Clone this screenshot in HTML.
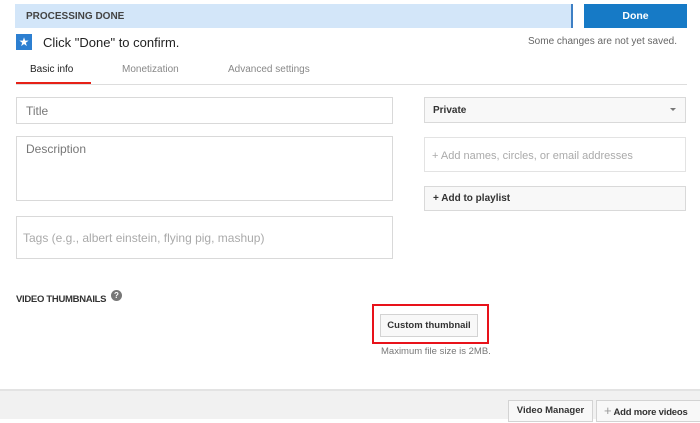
<!DOCTYPE html>
<html><head><style>
*{margin:0;padding:0;box-sizing:border-box}
body{width:700px;height:419px;overflow:hidden;background:#fff;font-family:"Liberation Sans",sans-serif;position:relative}
.a{position:absolute}
.box{position:absolute;border:1px solid #d9d9d9;background:#fff}
.ph{position:absolute;color:#999;font-size:12px}
</style></head><body>
<div class="a" style="left:15px;top:4px;width:558px;height:24px;background:#d3e6f9;border-right:2px solid #3d7fc4"></div>
<div class="a" style="left:26px;top:11px;font-size:10px;font-weight:bold;color:#444">PROCESSING DONE</div>
<div class="a" style="left:584px;top:4px;width:103px;height:24px;background:#167ac6;color:#fff;font-size:10.5px;font-weight:bold;text-align:center;line-height:24px">Done</div>
<div class="a" style="left:16px;top:34px;width:16px;height:16px;background:#2c7fd1;color:#fff;font-size:12px;line-height:16px;text-align:center">★</div>
<div class="a" style="left:43px;top:35px;font-size:13px;color:#222">Click "Done" to confirm.</div>
<div class="a" style="left:500px;top:36px;width:177px;text-align:right;font-size:10px;color:#666">Some changes are not yet saved.</div>
<div class="a" style="left:30px;top:64px;font-size:10px;color:#222">Basic info</div>
<div class="a" style="left:122px;top:64px;font-size:10px;color:#888">Monetization</div>
<div class="a" style="left:228px;top:64px;font-size:10px;color:#888">Advanced settings</div>
<div class="a" style="left:16px;top:84px;width:671px;height:1px;background:#ddd"></div>
<div class="a" style="left:16px;top:82px;width:75px;height:2px;background:#e62117"></div>
<div class="box" style="left:16px;top:97px;width:377px;height:27px"></div>
<div class="ph" style="left:26px;top:104px;color:#777">Title</div>
<div class="box" style="left:16px;top:136px;width:377px;height:65px"></div>
<div class="ph" style="left:26px;top:142px;color:#777">Description</div>
<div class="box" style="left:16px;top:216px;width:377px;height:43px"></div>
<div class="ph" style="left:23px;top:231px;color:#aaa">Tags (e.g., albert einstein, flying pig, mashup)</div>
<div class="box" style="left:424px;top:97px;width:262px;height:26px;background:#f8f8f8"></div>
<div class="a" style="left:433px;top:105px;font-size:10px;font-weight:bold;color:#333">Private</div>
<div class="a" style="left:670px;top:108px;width:0;height:0;border-left:3px solid transparent;border-right:3px solid transparent;border-top:3px solid #777"></div>
<div class="box" style="left:424px;top:137px;width:262px;height:35px;border-color:#e3e3e3"></div>
<div class="ph" style="left:432px;top:150px;color:#aaa;font-size:11px">+ Add names, circles, or email addresses</div>
<div class="box" style="left:424px;top:186px;width:262px;height:25px;background:#f8f8f8"></div>
<div class="a" style="left:433px;top:193px;font-size:10px;font-weight:bold;color:#333">+ Add to playlist</div>
<div class="a" style="left:16px;top:294px;font-size:9.5px;font-weight:bold;color:#333;letter-spacing:-0.3px">VIDEO THUMBNAILS</div>
<div class="a" style="left:111px;top:290px;width:11px;height:11px;border-radius:50%;background:#777;color:#fff;font-size:8px;font-weight:bold;text-align:center;line-height:11px">?</div>
<div class="a" style="left:372px;top:304px;width:117px;height:40px;border:2px solid #e8121a"></div>
<div class="a" style="left:380px;top:314px;width:98px;height:23px;border:1px solid #d3d3d3;background:#f8f8f8;font-size:9.5px;font-weight:bold;color:#333;text-align:center;line-height:21px">Custom thumbnail</div>
<div class="a" style="left:381px;top:346px;font-size:9.5px;color:#777">Maximum file size is 2MB.</div>
<div class="a" style="left:0;top:389px;width:700px;height:30px;background:#f1f1f1;border-top:2px solid #e3e3e3"></div>
<div class="a" style="left:508px;top:400px;width:85px;height:22px;border:1px solid #d3d3d3;background:#f8f8f8;font-size:9.5px;font-weight:bold;color:#333;text-align:center;line-height:20px">Video Manager</div>
<div class="a" style="left:596px;top:400px;width:110px;height:22px;border:1px solid #d3d3d3;background:#f8f8f8;font-size:9.5px;font-weight:bold;color:#333;padding-left:7px;line-height:20px;letter-spacing:-0.2px;white-space:nowrap"><span style="color:#999;font-weight:normal;font-size:13px">+</span> Add more videos</div>
</body></html>
